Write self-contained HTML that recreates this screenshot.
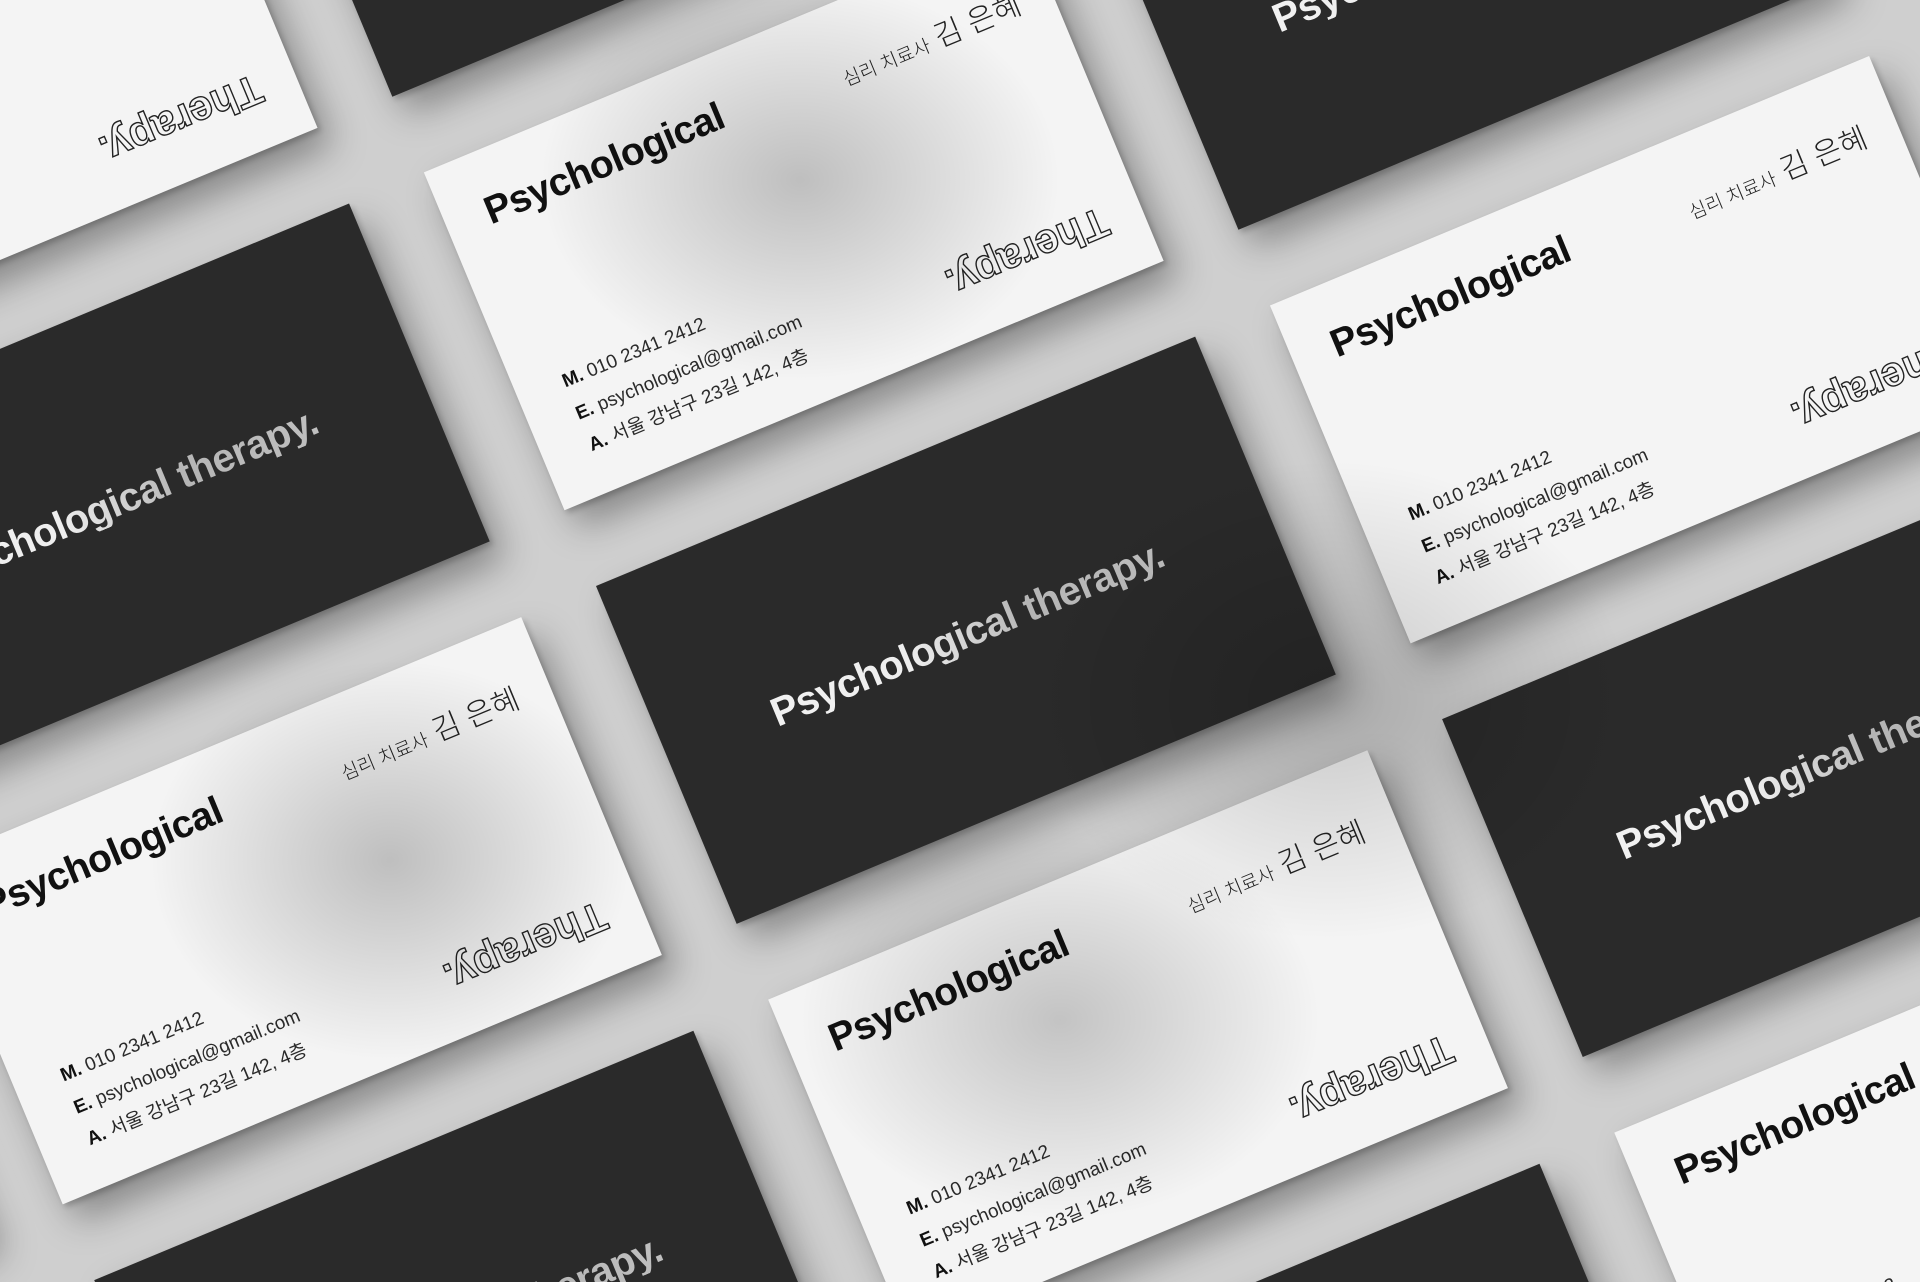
<!DOCTYPE html>
<html><head><meta charset="utf-8"><style>
html,body{margin:0;padding:0;width:1920px;height:1282px;overflow:hidden}
body{position:relative;background:#cfcfcf;font-family:"Liberation Sans","Noto Sans CJK KR",sans-serif}
#wrap{position:absolute;left:0;top:0;width:1920px;height:1282px;overflow:hidden;background:#cfcfcf}
#grid{position:absolute;left:596px;top:586px;transform:rotate(-22.6deg);transform-origin:0 0}
.c{position:absolute;width:649px;height:366px;box-shadow:8px 22px 36px rgba(0,0,0,.35),2px 4px 6px rgba(0,0,0,.2)}
.b{background:#2a2a2a}
.w{background:#f4f4f4}
.bt{position:absolute;left:0;right:0;top:167px;text-align:center;font-weight:bold;font-size:40px;line-height:40px;letter-spacing:-0.5px;white-space:nowrap;background:linear-gradient(90deg,#f4f4f4 0%,#eeeeee 40%,#b5b5b5 60%,#c8c8c8 100%);-webkit-background-clip:text;background-clip:text;color:transparent}
.ps{position:absolute;left:42px;top:42px;font-weight:bold;font-size:39px;line-height:39px;color:#111;letter-spacing:-0.5px;white-space:nowrap}
.nm{position:absolute;right:34px;top:59px;font-size:30px;line-height:30px;color:#222;white-space:nowrap;font-weight:300}
.nm small{font-size:19px;margin-right:8px}
.ct{position:absolute;left:48px;top:231px;font-size:19px;line-height:34.5px;color:#2a2a2a;white-space:nowrap}
.ct b{color:#111}
.th{position:absolute;left:526px;top:306px;transform:translate(-50%,-50%) rotate(180deg);font-weight:bold;font-size:42px;line-height:42px;color:#f4f4f4;-webkit-text-stroke:1.4px #222;white-space:nowrap}
#sh{position:absolute;left:0;top:0;width:1920px;height:1282px;pointer-events:none;background:
radial-gradient(ellipse 260px 200px at 800px 180px,rgba(0,0,0,.22),transparent),
radial-gradient(ellipse 240px 200px at 390px 860px,rgba(0,0,0,.22),transparent),
radial-gradient(ellipse 260px 200px at 1060px 1020px,rgba(0,0,0,.2),transparent),
radial-gradient(ellipse 300px 240px at 1330px 700px,rgba(0,0,0,.18),transparent);}
</style></head><body>
<div id="wrap">
<div id="grid"></div>
<div id="sh"></div>
</div>
<script>
(function(){
var g=document.getElementById('grid'),h='';
var W='<div class="ps">Psychological</div><div class="nm"><small>심리 치료사</small>김 은혜</div><div class="ct"><b>M.</b> 010 2341 2412<br><b>E.</b> psychological@gmail.com<br><b>A.</b> 서울 강남구 23길 142, 4층</div><div class="th">Therapy.</div>';
var B='<div class="bt">Psychological therapy.</div>';
for(var j=-3;j<=4;j++)for(var i=-3;i<=3;i++){
var bl=((i+j)%2+2)%2==0;
h+='<div class="c '+(bl?'b':'w')+'" style="left:'+(i*730)+'px;top:'+(j*448)+'px">'+(bl?B:W)+'</div>';}
g.innerHTML=h;})();
</script>
</body></html>
